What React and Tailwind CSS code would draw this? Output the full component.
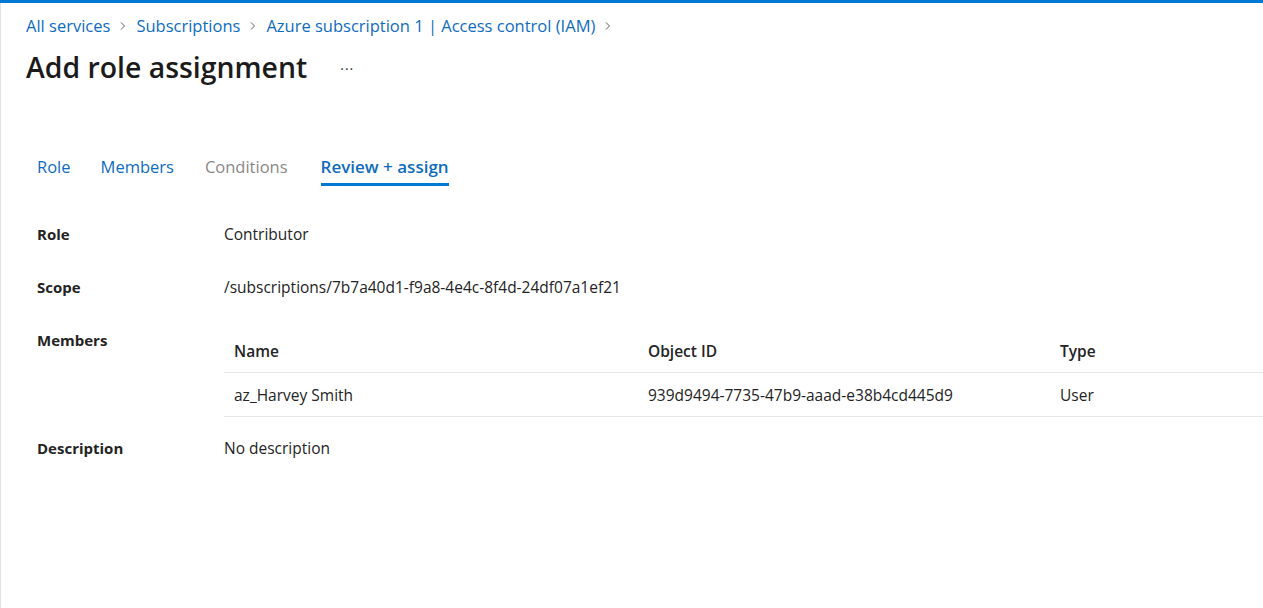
import React from "react";

const Chevron = () => (
  <svg width="10" height="10" viewBox="0 0 10 10" className="mx-[8px] shrink-0">
    <path d="M3 1.5 L6.5 5 L3 8.5" fill="none" stroke="#605e5c" strokeWidth="1" />
  </svg>
);

function Row({ label, children, className = "" }) {
  return (
    <div className={"flex " + className}>
      <div className="w-[187px] shrink-0 text-[15px] leading-[20px] font-bold text-[#242424]">{label}</div>
      <div className="flex-1 min-w-0 text-[15.5px] leading-[20px] text-[#242424]">{children}</div>
    </div>
  );
}

export default function App() {
  return (
    <div
      className="w-[1263px] h-[608px] bg-white overflow-hidden flex flex-col"
      style={{ fontFamily: '"Open Sans", "Noto Sans", sans-serif' }}
    >
      <div className="h-[3px] bg-[#0078d4] shrink-0" />
      <div className="flex-1 border-l border-[#e1e1e1] flex flex-col">
        <div className="pl-[25px] pt-[13px] flex items-center text-[16.5px] leading-[20px] text-[#0f6cbd]">
          <span>All services</span>
          <Chevron />
          <span>Subscriptions</span>
          <Chevron />
          <span>Azure subscription 1 | Access control (IAM)</span>
          <Chevron />
        </div>
        <div className="pl-[25px] mt-[13px] flex items-center">
          <h1 className="text-[28.4px] leading-[36px] font-semibold text-[#1b1b1b]">Add role assignment</h1>
          <span className="ml-[33px] text-[14px] text-[#323130] tracking-[1px] mt-[2px]">···</span>
        </div>

        <div className="pl-[36px] mt-[71px] flex items-start gap-[31px] text-[16.5px] leading-[22px]">
          <div className="text-[#0f6cbd] pb-[6px]">Role</div>
          <div className="text-[#0f6cbd] pb-[6px] -ml-[1px]">Members</div>
          <div className="text-[#8a8886] pb-[6px]">Conditions</div>
          <div className="text-[#0f6cbd] text-[17px] font-semibold pb-[5px] border-b-[3px] border-[#0078d4] ml-[2px]">Review + assign</div>
        </div>

        <div className="pl-[36px] mt-[38px] flex flex-col">
          <Row label="Role">Contributor</Row>
          <Row label="Scope" className="mt-[33px]">/subscriptions/7b7a40d1-f9a8-4e4c-8f4d-24df07a1ef21</Row>
          <Row label="Members" className="mt-[33px]">
            <div className="w-[1100px]">
              <div className="grid grid-cols-[414px_412px_1fr] h-[43px] pb-[1px] items-center border-b border-[#e6e6e6] font-semibold">
                <div className="pl-[10px]">Name</div>
                <div className="pl-[10px]">Object ID</div>
                <div className="pl-[10px]">Type</div>
              </div>
              <div className="grid grid-cols-[414px_412px_1fr] h-[44px] pt-[1px] items-center border-b border-[#e6e6e6]">
                <div className="pl-[10px]">az_Harvey Smith</div>
                <div className="pl-[10px]">939d9494-7735-47b9-aaad-e38b4cd445d9</div>
                <div className="pl-[10px]">User</div>
              </div>
            </div>
          </Row>
          <Row label="Description" className="mt-[21px]">No description</Row>
        </div>
      </div>
    </div>
  );
}
